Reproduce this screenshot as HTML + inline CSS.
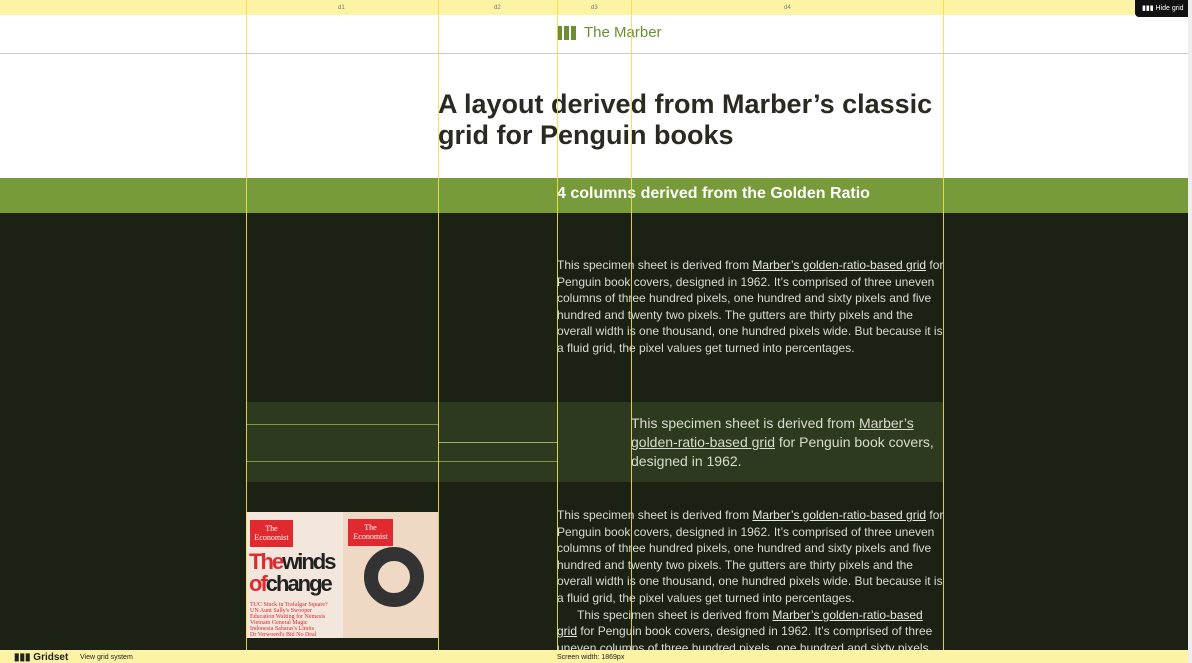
<!DOCTYPE html><html><head><style>
*{margin:0;padding:0;box-sizing:border-box}
body{width:1192px;height:663px;overflow:hidden;position:relative;background:#1c2213;font-family:"Liberation Sans",sans-serif}
.a{position:absolute}
.p{font-size:12px;line-height:16.6px;color:#d8dccf}
.p u{color:#e8e8e0}
.vl{position:absolute;top:0;height:663px;width:1px;background:#f3e040;opacity:.9}
</style></head><body>
<div class="a" style="left:0;top:0;width:1188px;height:178px;background:#fff"></div>
<div class="a" style="left:0;top:53px;width:1188px;height:1px;background:#ccc"></div>
<div class="a" style="left:1188px;top:0;width:4px;height:663px;background:#eee"></div>
<div class="a" style="left:557px;top:24px;font-size:15px;color:#6c8f33;display:flex;align-items:center"><span style="display:inline-block;width:5px;height:14px;background:#6c8f33;margin-right:2px"></span><span style="display:inline-block;width:5px;height:14px;background:#6c8f33;margin-right:2px"></span><span style="display:inline-block;width:5px;height:14px;background:#6c8f33;margin-right:8px"></span>The Marber</div>
<div class="a" style="left:438px;top:89px;font-size:27px;line-height:31px;font-weight:bold;color:#2a2a22;width:520px">A layout derived from Marber’s classic grid for Penguin books</div>
<div class="a" style="left:0;top:178px;width:1188px;height:35px;background:#779a3a"></div>
<div class="a" style="left:557px;top:185px;font-size:16px;font-weight:bold;color:#fff">4 columns derived from the Golden Ratio</div>
<div class="a p" style="left:557px;top:257px;width:390px">This specimen sheet is derived from <u>Marber’s golden-ratio-based grid</u> for Penguin book covers, designed in 1962. It’s comprised of three uneven columns of three hundred pixels, one hundred and sixty pixels and five hundred and twenty two pixels. The gutters are thirty pixels and the overall width is one thousand, one hundred pixels wide. But because it is a fluid grid, the pixel values get turned into percentages.</div>
<div class="a" style="left:246px;top:402px;width:697px;height:80px;background:#2e3a1f"></div>
<div class="a" style="left:246px;top:424px;width:192px;height:1px;background:#7a9a3a"></div>
<div class="a" style="left:246px;top:461px;width:311px;height:1px;background:#7a9a3a"></div>
<div class="a" style="left:438px;top:442px;width:119px;height:1px;background:#9aaa70"></div>
<div class="a" style="left:631px;top:414px;width:305px;font-size:14px;line-height:19px;color:#d8dccf">This specimen sheet is derived from <u>Marber’s golden-ratio-based grid</u> for Penguin book covers, designed in 1962.</div>
<div class="a p" style="left:557px;top:507px;width:390px">This specimen sheet is derived from <u>Marber’s golden-ratio-based grid</u> for Penguin book covers, designed in 1962. It’s comprised of three uneven columns of three hundred pixels, one hundred and sixty pixels and five hundred and twenty two pixels. The gutters are thirty pixels and the overall width is one thousand, one hundred pixels wide. But because it is a fluid grid, the pixel values get turned into percentages.<br>&nbsp;&nbsp;&nbsp;&nbsp;&nbsp;&nbsp;This specimen sheet is derived from <u>Marber’s golden-ratio-based</u><br><u>grid</u> for Penguin book covers, designed in 1962. It’s comprised of three<br>uneven columns of three hundred pixels, one hundred and sixty pixels</div>
<div class="a" style="left:246px;top:512px;width:97px;height:126px;background:#f3e6dc"></div>
<div class="a" style="left:343px;top:512px;width:95px;height:126px;background:#efd9c4"></div>
<div class="a" style="left:250px;top:520px;width:43px;height:27px;background:#e02a30;color:#fff;font-family:'Liberation Serif';font-size:8px;text-align:center;line-height:9px;padding-top:4px">The<br>Economist</div>
<div class="a" style="left:348px;top:519px;width:45px;height:27px;background:#e02a30;color:#fff;font-family:'Liberation Serif';font-size:8px;text-align:center;line-height:9px;padding-top:4px">The<br>Economist</div>
<div class="a" style="left:249px;top:551px;font-size:22px;font-weight:bold;line-height:22px;letter-spacing:-2px;color:#222"><span style="color:#e02a30">The</span>winds<br><span style="color:#e02a30">of</span>change</div>
<div class="a" style="left:250px;top:602px;font-family:'Liberation Serif';font-size:6px;line-height:6px;color:#e02a30">TUC Stuck in Trafalgar Square?<br>UN Aunt Sally's Swooper<br>Education Waiting for Nemesis<br>Vietnam General Magic<br>Indonesia Saharas's Limits<br>Dr Verwoerd's Bid No Deal</div>
<div class="a" style="left:364px;top:547px;width:60px;height:60px;border-radius:50%;border:14px solid #333"></div>
<div class="a" style="left:0;top:0;width:1188px;height:15px;background:#fdf3a4"></div>
<div class="a" style="left:246px;top:0;width:697px;height:15px;font-size:6px;color:#776"><span class="a" style="left:92px;top:5px">d1</span><span class="a" style="left:248px;top:5px">d2</span><span class="a" style="left:345px;top:5px">d3</span><span class="a" style="left:538px;top:5px">d4</span></div>
<div class="vl" style="left:246px"></div><div class="vl" style="left:438px"></div><div class="vl" style="left:557px"></div><div class="vl" style="left:631px"></div><div class="vl" style="left:943px"></div>
<div class="a" style="left:0;top:650px;width:1188px;height:13px;background:#fdf3a4;font-size:7px;color:#222"><span class="a" style="left:14px;top:2px;font-size:10px;font-weight:bold">▮▮▮ Gridset</span><span class="a" style="left:80px;top:4px">View grid system</span><span class="a" style="left:557px;top:4px">Screen width: 1869px</span></div>
<div class="a" style="left:1135px;top:0;width:53px;height:17px;background:#111;border-radius:0 0 0 4px;color:#fff;font-size:7px;line-height:17px;padding-left:7px">▮▮▮ Hide grid</div>
</body></html>
